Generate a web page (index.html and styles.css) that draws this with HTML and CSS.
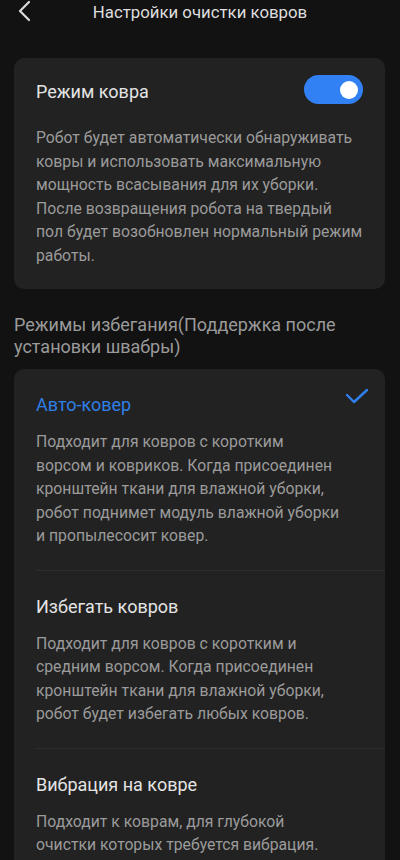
FILE: index.html
```html
<!DOCTYPE html>
<html lang="ru">
<head>
    <meta charset="UTF-8">
    <title>Настройки очистки ковров</title>
    <link rel="stylesheet" href="styles.css">
</head>
<body>
    <div class="top-bar">
        <button class="back-button" aria-label="Назад">
            <svg width="14" height="22" viewBox="0 0 14 22">
                <path d="M12 2 L3 11 L12 20" fill="none" stroke="#dcdcdc" stroke-width="2.2" stroke-linecap="round" stroke-linejoin="round"/>
            </svg>
        </button>
        <h1>Настройки очистки ковров</h1>
    </div>

    <div class="page">
        <div class="card carpet-mode">
            <div class="setting-row">
                <span class="setting-title">Режим ковра</span>
                <div class="switch on"><div class="knob"></div></div>
            </div>
            <p class="setting-desc">Робот будет автоматически обнаруживать ковры и использовать максимальную мощность всасывания для их уборки. После возвращения робота на твердый пол&nbsp;будет возобновлен нормальный режим работы.</p>
        </div>

        <div class="section-label">Режимы избегания(Поддержка после установки швабры)</div>

        <div class="card option-list">
            <div class="option selected">
                <div class="option-head">
                    <span class="option-title">Авто-ковер</span>
                    <svg class="check" width="24" height="16" viewBox="0 0 24 16">
                        <path d="M2 7 L9 14 L22 2" fill="none" stroke="#2f80ed" stroke-width="2.4" stroke-linecap="round" stroke-linejoin="round"/>
                    </svg>
                </div>
                <p class="option-desc">Подходит для ковров с коротким ворсом и ковриков. Когда присоединен кронштейн ткани для влажной уборки, робот поднимет модуль влажной уборки и пропылесосит ковер.</p>
            </div>
            <div class="option">
                <div class="option-head">
                    <span class="option-title">Избегать ковров</span>
                </div>
                <p class="option-desc">Подходит для ковров с коротким и средним ворсом. Когда присоединен кронштейн ткани для влажной уборки, робот будет избегать любых ковров.</p>
            </div>
            <div class="option">
                <div class="option-head">
                    <span class="option-title">Вибрация на ковре</span>
                </div>
                <p class="option-desc">Подходит к коврам, для глубокой очистки которых требуется вибрация.</p>
            </div>
        </div>
    </div>
</body>
</html>
```

FILE: styles.css
```css
body {
    font-family: Roboto, 'Noto Sans', sans-serif;
    background-color: #121212;
    color: #e2e2e2;
    margin: 0;
    padding: 0;
    width: 400px;
    height: 860px;
    overflow: hidden;
}

.top-bar {
    position: relative;
    height: 24px;
    display: flex;
    justify-content: center;
    align-items: center;
}

.back-button {
    position: absolute;
    left: 17px;
    top: 0;
    background: none;
    border: none;
    padding: 0;
    margin: 0;
    line-height: 0;
}

.top-bar h1 {
    margin: 0;
    font-size: 16.8px;
    font-weight: 400;
    color: #dedede;
}

.page {
    padding: 34px 15px 0 14px;
}

.card {
    background-color: #222222;
    border-radius: 10px;
}

/* ковровый режим */
.carpet-mode {
    padding: 17px 22px 22px 22px;
}

.setting-row {
    display: flex;
    justify-content: space-between;
    align-items: center;
    height: 29px;
}

.setting-title {
    font-size: 18px;
    color: #e4e4e4;
    padding-top: 4px;
}

.switch {
    width: 59px;
    height: 29px;
    border-radius: 15px;
    background-color: #3a3a3a;
    display: flex;
    align-items: center;
    padding: 0 5px;
    box-sizing: border-box;
}

.switch.on {
    background-color: #3181f4;
    justify-content: flex-end;
}

.knob {
    width: 18px;
    height: 18px;
    border-radius: 50%;
    background-color: #ffffff;
}

.setting-desc {
    margin: 22px 0 0 0;
    font-size: 15.75px;
    line-height: 23.5px;
    color: #9b9b9b;
}

.section-label {
    margin: 25px 0 11px 0;
    font-size: 18px;
    line-height: 22px;
    color: #9a9a9a;
}

/* список режимов */
.option-list {
    padding-left: 22px;
    border-radius: 10px 10px 0 0;
}

.option {
    padding: 24px 44px 22px 0;
    border-top: 1px solid #2e2e2e;
}

.option:first-child {
    border-top: none;
}

.option-head {
    display: flex;
    justify-content: space-between;
    align-items: flex-start;
    height: 24px;
    position: relative;
}

.option-title {
    font-size: 18px;
    line-height: 24px;
    color: #e4e4e4;
}

.option.selected .option-title {
    color: #2f7fe6;
}

.check {
    position: absolute;
    right: -28px;
    top: -5px;
}

.option-desc {
    margin: 13px 0 0 0;
    font-size: 15.75px;
    line-height: 23.5px;
    color: #9b9b9b;
}
```
